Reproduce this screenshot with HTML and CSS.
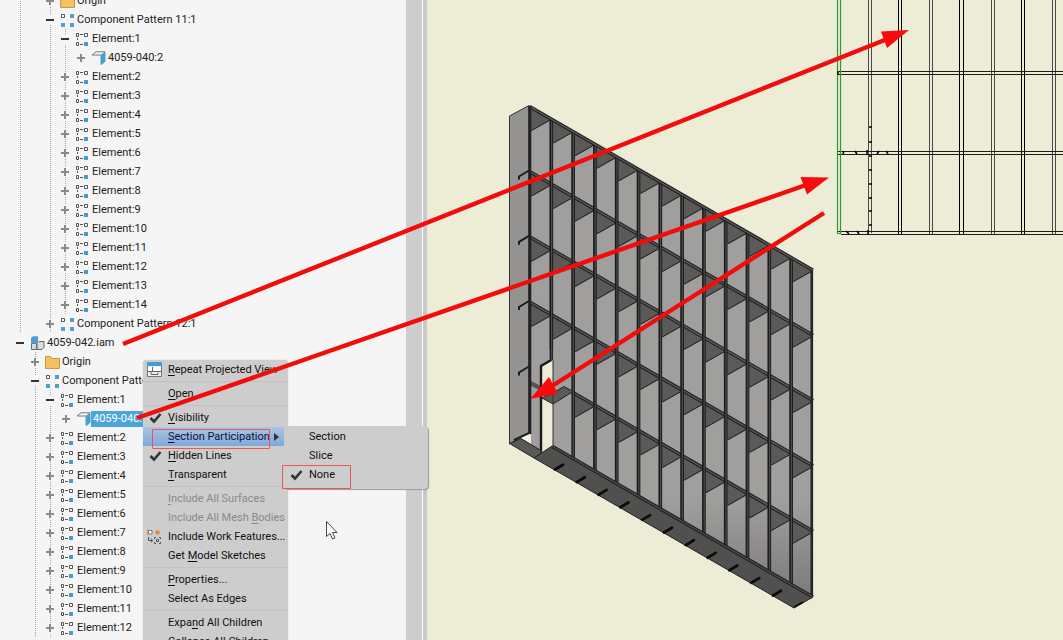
FILE: index.html
```html
<!DOCTYPE html>
<html lang="en">
<head>
<meta charset="utf-8">
<title>4059-042.iam</title>
<link rel="stylesheet" href="styles.css">
</head>
<body>
<svg class="sprites" aria-hidden="true">
  <symbol id="i-element" viewBox="0 0 15 14"><g fill="#fff" stroke="#555"><path d="M1.500 1.500h2v3h-2zM9.500 1.500h3v3h-3zM1.500 10.500h2v3h-2z"/><path d="M5 2.500h3M2.500 6v2M5 12.500h3" fill="none"/></g><path d="M9 10h4v4H9z" fill="#4a9cc8"/></symbol>
  <symbol id="i-pattern" viewBox="0 0 15 14"><path d="M1.500 1.500h3v3h-3z" fill="#fff" stroke="#555"/><path d="M10 1h4v4h-4zM1 10h4v4H1zM10 10h4v4h-4z" fill="#4fa0cc"/></symbol>
  <symbol id="i-folder" viewBox="0 0 15 14"><path d="M.5 1.500h5l1 2h8v10H.5z" fill="#f5c263" stroke="#c99a4a"/></symbol>
  <symbol id="i-part" viewBox="0 0 15 14"><path d="M1 4 5 .8h9L10.500 4z" fill="#f8f8f8" stroke="#777"/><path d="M9.500 4.500 14.500 1v9.500l-4 3.500-1-.5z" fill="#4a9fce"/></symbol>
  <symbol id="i-asm" viewBox="0 0 15 14"><path d="M1.500 7.500h5v6h-5zM7 7.500l2-2h5v6l-2 2H7z" fill="#dcdcdc" stroke="#666"/><path d="M1 2 3 .3h5V6L6.500 7.500H1z" fill="#4a9fce"/></symbol>
  <symbol id="i-check" viewBox="0 0 13 12"><path d="M1.500 6 5 9.500 11.500 2" fill="none" stroke="#333" stroke-width="2.600"/></symbol>
  <symbol id="i-view" viewBox="0 0 15 15"><path d="M.5.5h14v14H.5z" fill="#eee" stroke="#777"/><path d="M0 0h15v4H0z" fill="#459fd0"/><path d="M1 5h4v4H1zM6 5h8v4H6z" fill="#fff"/><path d="M1 9.500h13M5.500 5v4M4 9.500v3h7v-2" fill="none" stroke="#666"/></symbol>
  <symbol id="i-work" viewBox="0 0 15 15"><path d="M1.500 1.500h3.500v3.500H1.500z" fill="#fff" stroke="#777"/><path d="M.5 0v6" stroke="#e09a60"/><path d="M8 3.500h5M10.500 1v5" stroke="#e08a4a" stroke-width="2"/><path d="M1.500 8v3.500h4M4 9.500l1.500 2-1.500 2M7.500 10V8.500H9M12 8.500h1.500V10M7.500 13v1.500H9M12 14.500h1.500V13M9.500 10.500h2v2h-2z" fill="none" stroke="#555"/></symbol>
</svg>

<div class="app">
  <aside class="browser">
    <ul class="tree">
      <li class="branch">
        <ul class="children deep">
          <li><div class="row"><button class="toggle plus" aria-label="Expand"></button><svg class="icon"><use href="#i-folder"/></svg><span class="label">Origin</span></div></li>
          <li><div class="row"><button class="toggle minus" aria-label="Collapse"></button><svg class="icon"><use href="#i-pattern"/></svg><span class="label">Component Pattern 11:1</span></div>
            <ul class="children">
              <li><div class="row"><button class="toggle minus" aria-label="Collapse"></button><svg class="icon"><use href="#i-element"/></svg><span class="label">Element:1</span></div>
                <ul class="children leaf"><li><div class="row"><button class="toggle plus" aria-label="Expand"></button><svg class="icon"><use href="#i-part"/></svg><span class="label">4059-040:2</span></div></li></ul></li>
              <li><div class="row"><button class="toggle plus" aria-label="Expand"></button><svg class="icon"><use href="#i-element"/></svg><span class="label">Element:2</span></div></li>
              <li><div class="row"><button class="toggle plus" aria-label="Expand"></button><svg class="icon"><use href="#i-element"/></svg><span class="label">Element:3</span></div></li>
              <li><div class="row"><button class="toggle plus" aria-label="Expand"></button><svg class="icon"><use href="#i-element"/></svg><span class="label">Element:4</span></div></li>
              <li><div class="row"><button class="toggle plus" aria-label="Expand"></button><svg class="icon"><use href="#i-element"/></svg><span class="label">Element:5</span></div></li>
              <li><div class="row"><button class="toggle plus" aria-label="Expand"></button><svg class="icon"><use href="#i-element"/></svg><span class="label">Element:6</span></div></li>
              <li><div class="row"><button class="toggle plus" aria-label="Expand"></button><svg class="icon"><use href="#i-element"/></svg><span class="label">Element:7</span></div></li>
              <li><div class="row"><button class="toggle plus" aria-label="Expand"></button><svg class="icon"><use href="#i-element"/></svg><span class="label">Element:8</span></div></li>
              <li><div class="row"><button class="toggle plus" aria-label="Expand"></button><svg class="icon"><use href="#i-element"/></svg><span class="label">Element:9</span></div></li>
              <li><div class="row"><button class="toggle plus" aria-label="Expand"></button><svg class="icon"><use href="#i-element"/></svg><span class="label">Element:10</span></div></li>
              <li><div class="row"><button class="toggle plus" aria-label="Expand"></button><svg class="icon"><use href="#i-element"/></svg><span class="label">Element:11</span></div></li>
              <li><div class="row"><button class="toggle plus" aria-label="Expand"></button><svg class="icon"><use href="#i-element"/></svg><span class="label">Element:12</span></div></li>
              <li><div class="row"><button class="toggle plus" aria-label="Expand"></button><svg class="icon"><use href="#i-element"/></svg><span class="label">Element:13</span></div></li>
              <li><div class="row"><button class="toggle plus" aria-label="Expand"></button><svg class="icon"><use href="#i-element"/></svg><span class="label">Element:14</span></div></li>
            </ul></li>
          <li><div class="row"><button class="toggle plus" aria-label="Expand"></button><svg class="icon"><use href="#i-pattern"/></svg><span class="label">Component Pattern 12:1</span></div></li>
        </ul>
      </li>
      <li><div class="row"><button class="toggle minus" aria-label="Collapse"></button><svg class="icon"><use href="#i-asm"/></svg><span class="label">4059-042.iam</span></div>
        <ul class="children">
          <li><div class="row"><button class="toggle plus" aria-label="Expand"></button><svg class="icon"><use href="#i-folder"/></svg><span class="label">Origin</span></div></li>
          <li><div class="row"><button class="toggle minus" aria-label="Collapse"></button><svg class="icon"><use href="#i-pattern"/></svg><span class="label">Component Patte</span></div>
            <ul class="children">
              <li><div class="row"><button class="toggle minus" aria-label="Collapse"></button><svg class="icon"><use href="#i-element"/></svg><span class="label">Element:1</span></div>
                <ul class="children leaf"><li><div class="row"><button class="toggle plus" aria-label="Expand"></button><svg class="icon"><use href="#i-part"/></svg><span class="label selected">4059-040:</span></div></li></ul></li>
              <li><div class="row"><button class="toggle plus" aria-label="Expand"></button><svg class="icon"><use href="#i-element"/></svg><span class="label">Element:2</span></div></li>
              <li><div class="row"><button class="toggle plus" aria-label="Expand"></button><svg class="icon"><use href="#i-element"/></svg><span class="label">Element:3</span></div></li>
              <li><div class="row"><button class="toggle plus" aria-label="Expand"></button><svg class="icon"><use href="#i-element"/></svg><span class="label">Element:4</span></div></li>
              <li><div class="row"><button class="toggle plus" aria-label="Expand"></button><svg class="icon"><use href="#i-element"/></svg><span class="label">Element:5</span></div></li>
              <li><div class="row"><button class="toggle plus" aria-label="Expand"></button><svg class="icon"><use href="#i-element"/></svg><span class="label">Element:6</span></div></li>
              <li><div class="row"><button class="toggle plus" aria-label="Expand"></button><svg class="icon"><use href="#i-element"/></svg><span class="label">Element:7</span></div></li>
              <li><div class="row"><button class="toggle plus" aria-label="Expand"></button><svg class="icon"><use href="#i-element"/></svg><span class="label">Element:8</span></div></li>
              <li><div class="row"><button class="toggle plus" aria-label="Expand"></button><svg class="icon"><use href="#i-element"/></svg><span class="label">Element:9</span></div></li>
              <li><div class="row"><button class="toggle plus" aria-label="Expand"></button><svg class="icon"><use href="#i-element"/></svg><span class="label">Element:10</span></div></li>
              <li><div class="row"><button class="toggle plus" aria-label="Expand"></button><svg class="icon"><use href="#i-element"/></svg><span class="label">Element:11</span></div></li>
              <li><div class="row"><button class="toggle plus" aria-label="Expand"></button><svg class="icon"><use href="#i-element"/></svg><span class="label">Element:12</span></div></li>
            </ul></li>
        </ul></li>
    </ul>
    <div class="scrollbar"></div>
    <div class="splitter"></div>
  </aside>

  <main class="viewport">
    <svg class="scene" viewBox="427 0 636 640" preserveAspectRatio="xMinYMin slice" role="img" aria-label="Grid assembly with a projected view">
      <defs>
        <linearGradient id="shade" x1="0" y1="0" x2="0" y2="1"><stop offset="0" stop-color="#a09f9e"/><stop offset=".8" stop-color="#a09f9e"/><stop offset="1" stop-color="#7c7b7a"/></linearGradient>
        <path id="corner" d="M0 0 21.800 12.600V14L3 24.500H0z" fill="#5b5a58" stroke="none"/>
        <path id="lip" d="M2 24.500 20 14.200" stroke="#222" stroke-width="1"/>
        <g id="cell"><use href="#corner"/><use href="#lip"/></g>
        <g id="row">
          <use href="#cell"/><use href="#cell" x="21.800" y="12.600"/><use href="#cell" x="43.600" y="25.200"/><use href="#cell" x="65.400" y="37.800"/><use href="#cell" x="87.200" y="50.400"/><use href="#cell" x="109" y="63"/><use href="#cell" x="130.800" y="75.600"/><use href="#cell" x="152.600" y="88.200"/><use href="#cell" x="174.400" y="100.800"/><use href="#cell" x="196.200" y="113.400"/><use href="#cell" x="218" y="126"/><use href="#cell" x="239.800" y="138.600"/><use href="#cell" x="261.600" y="151.200"/>
        </g>
        <g id="shelf" fill="none"><path d="M0 0 283.500 163.700" stroke="#222" stroke-width="3.600"/><path d="M0 0 283.500 163.700" stroke="#62615f" stroke-width="1.200"/></g>
        <g id="post" fill="none"><path d="M0 0V327" stroke="#1c1c1c" stroke-width="3.700"/><path d="M.3 0V327" stroke="#4c4b4a" stroke-width="1.200"/></g>
        <g id="slot"><path d="M0 0 8-4.800" stroke="#0c0c0c" stroke-width="2.800" stroke-linecap="round"/></g>
        <path id="tab" d="M-10 8V5L0-1" fill="none" stroke="#1c1c1c" stroke-width="2"/>
      </defs>

      <path d="M529.500 106 813 270V597L529.500 434z" fill="url(#shade)"/>
      <use href="#row" x="529.500" y="106"/>
      <use href="#row" x="529.500" y="171.500"/>
      <use href="#row" x="529.500" y="236.800"/>
      <use href="#row" x="529.500" y="302"/>
      <use href="#row" x="529.500" y="367.500"/>
      <use href="#shelf" x="529.500" y="171.500"/>
      <use href="#shelf" x="529.500" y="236.800"/>
      <use href="#shelf" x="529.500" y="302"/>
      <use href="#shelf" x="529.500" y="367.500"/>
      <use href="#post" x="551.300" y="119"/><use href="#post" x="573.100" y="131"/><use href="#post" x="594.900" y="144"/><use href="#post" x="616.700" y="157"/><use href="#post" x="638.500" y="169"/><use href="#post" x="660.300" y="182"/><use href="#post" x="682.100" y="194"/><use href="#post" x="703.900" y="207"/><use href="#post" x="725.700" y="219"/><use href="#post" x="747.500" y="232"/><use href="#post" x="769.300" y="245"/><use href="#post" x="791.100" y="257"/>
      <path d="M811.800 270V597" stroke="#252525" stroke-width="2.600"/>
      <use href="#shelf" x="529.500" y="106.500"/>

      <path d="M509.500 116 529 105.500V433L519 438 509.500 444z" fill="#949392" stroke="#333"/>
      <path d="M531 350H549.400V362L541 367V452L531 447z" fill="#a09f9e"/>
      <path d="M541 366 553 360V446L541 455z" fill="#ececd7"/>
      <path d="M553.200 350H571.200V456L553.200 446z" fill="#a09f9e"/>
      <path d="M531 381 541 386V391L531 386z" fill="#555"/>
      <path d="M542 398 553 393 564 386.500 573 391.500 553 404z" fill="#5b5a58" stroke="#222"/>
      <path d="M553 360V446" stroke="#333"/>
      <path d="M551.300 360 541 366V454" fill="none" stroke="#1c1c1c" stroke-width="2.400"/>
      <use href="#tab" x="529" y="171.500"/><use href="#tab" x="529" y="236.800"/><use href="#tab" x="529" y="302"/><use href="#tab" x="529" y="367.500"/>
      <path d="M529.800 106V434" stroke="#222" stroke-width="3"/>
      <path d="M521 438 530 434V444z" fill="#f4f4e4"/>
      <path d="M509.500 443.500 521 438.500 541 450.500V454L534 458z" fill="#5b5957" stroke="#222"/>
      <path d="M514 440 529 433" stroke="#222" stroke-width="2"/>

      <path d="M534 458 552 446 813 597 794 608z" fill="#50504e" stroke="#222"/>
      <path d="M552.500 446.500 813 597" stroke="#242424" stroke-width="3.600"/>
      <path d="M552.500 446.500 813 597" stroke="#5c5b5a" stroke-width="1"/>
      <use href="#slot" x="555" y="469.500"/><use href="#slot" x="576.800" y="482.100"/><use href="#slot" x="598.600" y="494.700"/><use href="#slot" x="620.400" y="507.300"/><use href="#slot" x="642.200" y="519.900"/><use href="#slot" x="664" y="532.500"/><use href="#slot" x="685.800" y="545.100"/><use href="#slot" x="707.600" y="557.700"/><use href="#slot" x="729.400" y="570.300"/><use href="#slot" x="751.200" y="582.900"/><use href="#slot" x="773" y="595.500"/>
      <path d="M794 607 803 602" stroke="#111" stroke-width="2"/>

      <g fill="none" stroke="#1d1d1b" stroke-width="1">
        <path d="M868.500 0V233M871.500 0V233M929.500 0V234M932.500 0V234M991.500 0V234M994.500 0V234M1052.500 0V234M1055.500 0V234" stroke="#4a4a48"/>
        <path d="M898.500 0V234M901.500 0V234M959.500 0V234M963.500 0V234M1021.500 0V234M1024.500 0V234" stroke="#000"/>
        <path d="M837 71.500H1063M837 74.500H1063M837 151.500H1063M837 154.500H1063M837 231.500H1063M841 234.500H1063"/>
        <path d="M869 127h3M869 142h3M869 156h3M869 170h3M869 184h3M869 198h3M869 211h3M869 225h3M844 151l-1 3M855 151l2 3M867 150v5M879 151l-2 3M886 151l2 3M846 231l3 3M857 231l2 3M868 230v5" stroke="#000" stroke-width="1.500"/>
        <path d="M837.500 0V233.500H840.500V0" stroke="#2f9a2f" stroke-width="1.200"/>
        <path d="M838 71.500v3" stroke="#000" stroke-width="1.500"/>
      </g>
    </svg>
  </main>
</div>

<div class="menu" role="menu">
  <button class="item" role="menuitem"><svg class="mark wide"><use href="#i-view"/></svg><span><u>R</u>epeat Projected View</span></button>
  <hr>
  <button class="item" role="menuitem"><span><u>O</u>pen</span></button>
  <hr>
  <button class="item" role="menuitem"><svg class="mark"><use href="#i-check"/></svg><span><u>V</u>isibility</span></button>
  <button class="item active" role="menuitem"><span><u>S</u>ection Participation</span><i class="more"></i></button>
  <button class="item" role="menuitem"><svg class="mark"><use href="#i-check"/></svg><span><u>H</u>idden Lines</span></button>
  <button class="item" role="menuitem"><span><u>T</u>ransparent</span></button>
  <hr>
  <button class="item" role="menuitem" disabled><span><u>I</u>nclude All Surfaces</span></button>
  <button class="item" role="menuitem" disabled><span>Include All Mesh <u>B</u>odies</span></button>
  <button class="item" role="menuitem"><svg class="mark wide"><use href="#i-work"/></svg><span>Include Work Features...</span></button>
  <button class="item" role="menuitem"><span>Get <u>M</u>odel Sketches</span></button>
  <hr>
  <button class="item" role="menuitem"><span><u>P</u>roperties...</span></button>
  <button class="item" role="menuitem"><span>Select As Edges</span></button>
  <hr>
  <button class="item" role="menuitem"><span>Expa<u>n</u>d All Children</span></button>
  <button class="item" role="menuitem"><span>Collapse All Children</span></button>
</div>
<div class="menu submenu" role="menu">
  <button class="item" role="menuitem"><span>Section</span></button>
  <button class="item" role="menuitem"><span>Slice</span></button>
  <button class="item" role="menuitem"><svg class="mark"><use href="#i-check"/></svg><span>None</span></button>
</div>

<svg class="notes" width="1063" height="640" aria-hidden="true">
  <g fill="none" stroke="#ee5555"><path d="M152.500 429.500h117v19h-117zM282.500 465.500h68v23h-68z"/></g>
  <g stroke="#f20d0d" stroke-width="4.400"><path d="M123 344 886 39.500M137 418 806 185M824 213 552 386"/></g>
  <path d="M909 30 881 31.500 887 48zM829 177.500 800.500 177 807 194.500zM530 399 549 377 558 393.500z" fill="#fa0a0a"/>
  <path d="M326.500 521.500v15l3.500-3 2.500 5.500 2.500-1-2.500-5.500h4.500z" fill="#fff" stroke="#444"/>
</svg>
</body>
</html>
```
FILE: styles.css
```css
* { box-sizing: border-box; }

body {
  margin: 0;
  overflow: hidden;
  font: 11px/19px Roboto, "Liberation Sans", sans-serif;
  color: #222;
}

button {
  font: inherit;
  color: inherit;
  border: 0;
  padding: 0;
  background: none;
}

ul { margin: 0; padding: 0; list-style: none; }

.sprites { display: none; }

.app {
  display: flex;
  height: 100vh;
  overflow: hidden;
}

/* Model browser */
.browser {
  display: flex;
  flex: 0 0 427px;
  background: #f5f5f5;
}

.tree {
  flex: 1;
  margin-top: -9px;
  padding-left: 15px;
}

.branch,
.children {
  background: repeating-linear-gradient(#a8a8a8 0 1px, transparent 1px 2px) 5px 0 / 1px 100% no-repeat;
}

.children { margin-left: 15px; }
.children.deep { margin-left: 0; padding-left: 30px; background-position: 35px 0; }
.children.leaf { background: none; }
.children .leaf { margin-left: 16px; }

.row {
  display: flex;
  align-items: center;
  height: 19px;
  white-space: nowrap;
}

.toggle {
  flex: none;
  width: 10px;
  height: 10px;
  margin-right: 5px;
}

.toggle.plus {
  background:
    linear-gradient(#8a8a8a, #8a8a8a) center / 8px 2px no-repeat,
    linear-gradient(#8a8a8a, #8a8a8a) center / 2px 8px no-repeat,
    #f5f5f5;
}

.toggle.minus {
  background: linear-gradient(#333, #333) center / 8px 2px no-repeat, #f5f5f5;
}

.icon {
  flex: none;
  width: 15px;
  height: 14px;
}

.label { padding: 0 2px; line-height: 16px; }

.label.selected { color: #fff; background: #4aa5d8; padding-right: 8px; }

.scrollbar { width: 16px; background: #cdcdcd; }

.splitter {
  width: 5px;
  background: #c8c8c8;
  border-left: 1px solid #fff;
}

/* Graphics area */
.viewport {
  flex: 1;
  min-width: 0;
  background: #ececd7;
}

.scene { display: block; width: 100%; height: 100%; }

/* Context menu */
.menu {
  position: absolute;
  top: 360px;
  left: 143px;
  width: 145px;
  border-radius: 4px;
  background: #cdcdcd;
  box-shadow: 0 0 1px #999;
  color: #111;
}

.menu hr {
  margin: 2px 0;
  border: 0;
  border-top: 1px solid #c2c2c2;
}

.item {
  display: flex;
  align-items: center;
  width: 100%;
  height: 19px;
  padding-left: 25px;
  text-align: left;
  white-space: nowrap;
}

.item:disabled { color: #8a8a8a; }

.item.active {
  background: linear-gradient(#a9c5e6, #7fa8d8);
  color: #10103a;
}

.menu u { text-underline-offset: 2px; }

.mark {
  width: 13px;
  height: 12px;
  margin: 0 6px 0 -19px;
}

.mark.wide {
  width: 15px;
  height: 15px;
  margin: 0 6px 0 -21px;
}

.more {
  margin: 0 9px 0 auto;
  border: 4px solid transparent;
  border-left: 5px solid #333;
  border-right: 0;
}

.submenu {
  top: 426px;
  left: 284px;
  width: 144px;
  padding: 1px 0 5px;
  box-shadow: 1px 1px 1px #999;
}

/* Arrows and highlights over the whole window */
.notes {
  position: absolute;
  top: 0;
  left: 0;
  pointer-events: none;
}
```
